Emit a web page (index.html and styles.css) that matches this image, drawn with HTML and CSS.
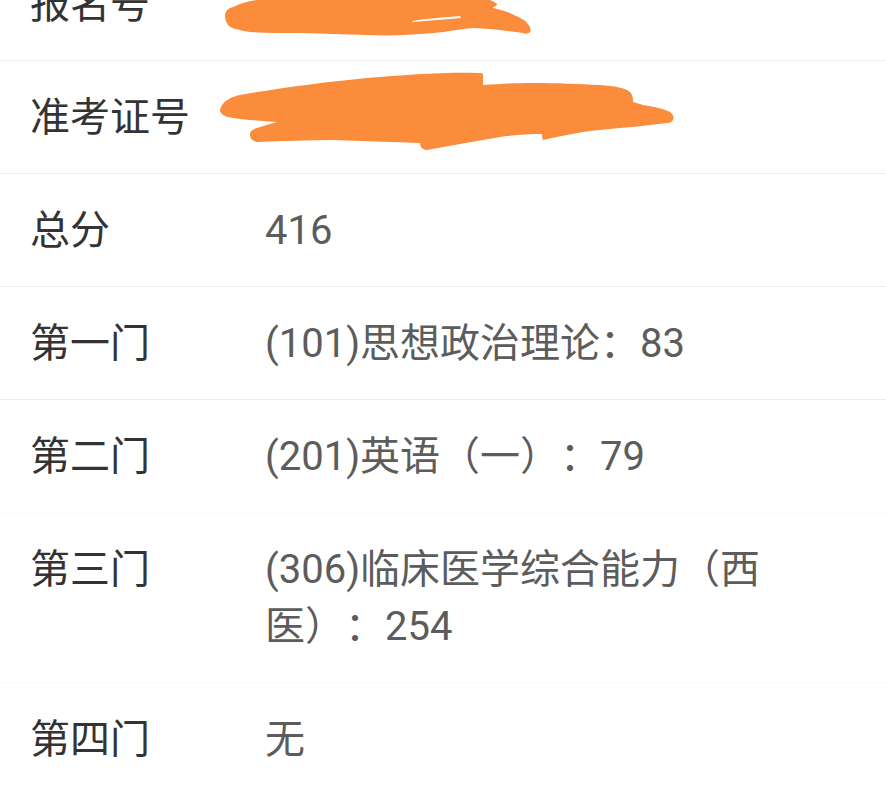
FILE: index.html
```html
<!DOCTYPE html>
<html lang="zh-CN">

<head>
    <meta charset="utf-8">
    <meta name="viewport" content="width=device-width, initial-scale=1.0">
    <title>成绩查询</title>
    <link rel="stylesheet" href="styles.css">
</head>

<body>

    <section class="liste">
        <div class="raekke">
            <span class="navn">报名号</span>
            <span class="vaerdi"></span>
        </div>
        <div class="raekke">
            <span class="navn">准考证号</span>
            <span class="vaerdi"></span>
        </div>
        <div class="raekke">
            <span class="navn">总分</span>
            <span class="vaerdi">416</span>
        </div>
        <div class="raekke">
            <span class="navn">第一门</span>
            <span class="vaerdi">(101)思想政治理论：83</span>
        </div>
        <div class="raekke svag">
            <span class="navn">第二门</span>
            <span class="vaerdi">(201)英语（一）：79</span>
        </div>
        <div class="raekke svag">
            <span class="navn">第三门</span>
            <span class="vaerdi">(306)临床医学综合能力（西医）：254</span>
        </div>
        <div class="raekke ingen">
            <span class="navn">第四门</span>
            <span class="vaerdi">无</span>
        </div>
    </section>

    <!-- redaction scribbles over the two ids -->
    <svg class="streg" width="886" height="180" viewBox="0 0 886 180">
        <path fill="#fa8c3b" d="M225,15 C226,10 229,8 233,7 C240,4 248,1 257,0 L490,0 C495,2 498,4 497,5 C495,7 492,7 493,8 C500,10 506,11 510,13 C518,17 524,19 527,23 C531,27 531,30 530,32 C528,34 525,34 523,33 C515,32 508,31 500,30 C490,29 481,28 473,28 C460,29 447,32 433,33 C410,35 390,36 367,35 C345,34 322,34 300,33 C283,33 265,33 250,32 C238,30 228,28 227,23 C225,20 225,17 225,15 Z" />
        <path fill="#fdfdfd" d="M412,21 C425,19 445,17 460,16 L461,18 C446,19 428,21 413,22 Z" />
        <path fill="#fa8c3b" d="M220,110 C222,101 231,97 240,95 C280,88 325,82 367,78 C405,75 445,72 477,73 C481,73 483,73 483,75 L483,85 C500,84 515,83 533,83 C555,83 580,84 600,85 C615,86 625,88 630,92 C633,95 633,99 633,102 C636,103 640,104 643,105 C655,107 665,109 670,112 C674,115 674,118 673,120 C672,122 670,123 667,123 C655,124 645,126 633,127 C615,128 598,130 583,132 C570,134 556,137 543,140 C542,138 542,136 542,134 C528,134 514,135 500,137 C475,141 450,146 427,150 C423,150 420,147 420,143 C392,142 362,141 333,140 C308,140 282,141 257,142 C252,141 250,138 250,135 C250,131 253,129 257,128 C263,126 270,124 277,122 C262,121 247,120 233,118 C225,117 220,114 220,110 Z" />
    </svg>

</body>

</html>
```

FILE: styles.css
```css
body {
    margin: 0;
    background-color: #ffffff;
    font-family: Roboto, "Noto Sans CJK SC", sans-serif;
    overflow: hidden;
}

.liste {
    margin-top: -52px;
}

.raekke {
    display: flex;
    padding: 28px 0 27px 30px;
    border-bottom: 1px solid #ececec;
    font-size: 40px;
    line-height: 57px;
    text-spacing-trim: space-all;
}

.svag {
    border-bottom-color: #fbfbfb;
}

.ingen {
    border-bottom: none;
}

.navn {
    width: 235px;
    flex-shrink: 0;
    color: #333333;
}

.vaerdi {
    width: 525px;
    color: #5c5c5c;
}

.streg {
    position: absolute;
    top: 0;
    left: 0;
}
```
